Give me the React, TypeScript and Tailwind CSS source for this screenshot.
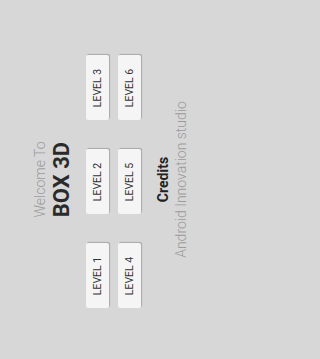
import React from "react";

const levels = [
  ["LEVEL 1", "LEVEL 2", "LEVEL 3"],
  ["LEVEL 4", "LEVEL 5", "LEVEL 6"],
];

export default function App() {
  return (
    <div className="w-full min-h-screen bg-[#d7d7d7]">
      <div
        className="w-[202px] h-[359px] overflow-hidden bg-[#d7d7d7]"
        style={{ fontFamily: "Roboto, 'Liberation Sans', sans-serif" }}
      >
        <div className="w-[359px] h-[202px] origin-top-left -rotate-90 translate-y-[359px] flex flex-col items-center pt-[32px]">
          <div className="text-[14px] leading-[16px] font-light text-[#9b9b9b]">Welcome To</div>
          <div className="text-[22px] leading-[24px] font-bold text-[#2a2a2a] mt-[2px]">BOX 3D</div>
          <div className="mt-[12px] mr-[5px] flex flex-col gap-[9px]">
            {levels.map((row, i) => (
              <div key={i} className="flex gap-[29px]">
                {row.map((l) => (
                  <button
                    key={l}
                    className="w-[65px] h-[23px] rounded-[2px] bg-[#f5f5f5] shadow-[1px_1px_1px_rgba(0,0,0,0.22)] text-[10.5px] text-[#333] flex items-center justify-center"
                  >
                    {l}
                  </button>
                ))}
              </div>
            ))}
          </div>
          <div className="mt-[14px] text-[14px] leading-[16px] font-bold text-[#222]">Credits</div>
          <div className="mt-[2px] text-[14px] leading-[16px] font-light text-[#9b9b9b]">Android Innovation studio</div>
        </div>
      </div>
    </div>
  );
}
